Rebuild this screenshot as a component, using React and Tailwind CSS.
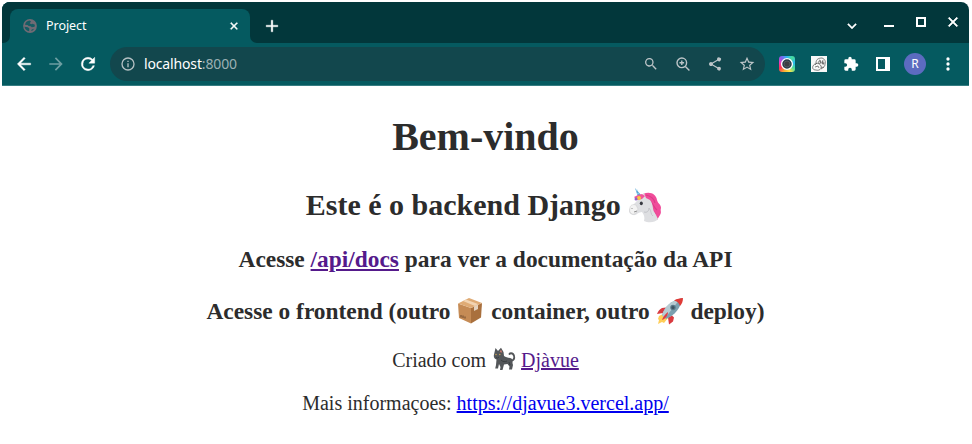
import React from "react";

const iconPaths = {
  back: "M20 11H7.83l5.59-5.59L12 4l-8 8 8 8 1.41-1.41L7.83 13H20v-2z",
  forward: "M12 4l-1.41 1.41L16.17 11H4v2h12.17l-5.58 5.59L12 20l8-8z",
  reload:
    "M17.65 6.35A7.958 7.958 0 0 0 12 4a8 8 0 1 0 7.73 10h-2.08A6 6 0 1 1 12 6c1.66 0 3.14.69 4.22 1.78L13 11h7V4l-2.35 2.35z",
  close:
    "M19 6.41L17.59 5 12 10.59 6.41 5 5 6.41 10.59 12 5 17.59 6.41 19 12 13.41 17.59 19 19 17.59 13.41 12z",
  plus: "M19 13h-6v6h-2v-6H5v-2h6V5h2v6h6z",
  chevron: "M7.41 8.59L12 13.17l4.59-4.58L18 10l-6 6-6-6z",
  info: "M11 7h2v2h-2zm0 4h2v6h-2zm1-9a10 10 0 1 0 0 20 10 10 0 0 0 0-20zm0 18a8 8 0 1 1 0-16 8 8 0 0 1 0 16z",
  search:
    "M15.5 14h-.79l-.28-.27a6.5 6.5 0 1 0-.7.7l.27.28v.79l5 4.99L20.49 19l-4.99-5zm-6 0a4.5 4.5 0 1 1 0-9 4.5 4.5 0 0 1 0 9z",
  share:
    "M18 16.08c-.76 0-1.44.3-1.96.77L8.91 12.7a3.3 3.3 0 0 0 0-1.4l7.05-4.11A2.99 2.99 0 1 0 15 5c0 .24.04.47.09.7L8.04 9.81a3 3 0 1 0 0 4.38l7.12 4.16a2.92 2.92 0 1 0 2.84-2.27z",
  star: "M22 9.24l-7.19-.62L12 2 9.19 8.63 2 9.24l5.46 4.73L5.82 21 12 17.27 18.18 21l-1.63-7.03L22 9.24zM12 15.4l-3.76 2.27 1-4.28-3.32-2.88 4.38-.38L12 6.1l1.71 4.04 4.38.38-3.32 2.88 1 4.28L12 15.4z",
  puzzle:
    "M20.5 11H19V7a2 2 0 0 0-2-2h-4V3.5a2.5 2.5 0 0 0-5 0V5H4a2 2 0 0 0-2 2v3.8h1.5a2.7 2.7 0 0 1 0 5.4H2V20c0 1.1.9 2 2 2h3.8v-1.5a2.7 2.7 0 0 1 5.4 0V22H17a2 2 0 0 0 2-2v-4h1.5a2.5 2.5 0 0 0 0-5z",
  more: "M12 8a2 2 0 1 0 0-4 2 2 0 0 0 0 4zm0 2a2 2 0 1 0 0 4 2 2 0 0 0 0-4zm0 6a2 2 0 1 0 0 4 2 2 0 0 0 0-4z",
};

function Icon({ name, className }) {
  return (
    <svg viewBox="0 0 24 24" fill="currentColor" className={`shrink-0 ${className}`}>
      <path d={iconPaths[name]} />
    </svg>
  );
}

function Globe() {
  return (
    <svg viewBox="0 0 16 16" className="size-4 shrink-0">
      <circle cx="8" cy="8" r="6.9" fill="#706b74" />
      <path d="M3 6.8C3.4 4.3 5.2 2.8 7.6 2.6L9 3.5 7.7 5.2l1.5 1.1 1.3-.6 2.4 1.1-.3 2-2.7.5-1.3-1.1-2-.3-1-1z" fill="#155c63" />
      <path d="M2.5 8.8l3.4.4 1.5 1.3-.3 2.7C4.7 13 2.9 11.4 2.5 8.8zm6.7 4.2l.5-1.6 2.4-.7c-.7 1.2-1.6 1.9-2.9 2.3z" fill="#155c63" />
    </svg>
  );
}

function ColorRing() {
  return (
    <span className="flex size-4 shrink-0 items-center justify-center rounded-[3px] bg-[conic-gradient(#27b8f4,#48dc9a,#27b8f4,#48dc9a,#ffe34b,#f6b332,#fa374e,#ed38bd,#8061ed,#27b8f4)]">
      <svg viewBox="0 0 16 16" className="size-4">
        <circle cx="8" cy="8" r="5.4" fill="#263b48" stroke="#fff" strokeWidth="1.3" />
        <circle cx="8" cy="8" r="3" fill="#3e3e43" stroke="#5a6065" strokeWidth=".8" />
      </svg>
    </span>
  );
}

function SketchExtension() {
  return (
    <svg viewBox="0 0 16 16" className="size-4 shrink-0" fill="none" stroke="#505050" strokeWidth=".7">
      <path fill="#f8f8f8" stroke="none" d="M0 0h16v16H0z" />
      <path d="M5 7C5 3 8 2 11 2c3 1 4 4 3 6 0 3-2 4-4 3M2 10c-1 2 0 4 3 4 3 1 6-1 5-4-1-3-6-4-8 0z" />
      <path d="M8 4l2 1-1 2m3-3-1 3 2 1M4 11l3-1 1 2m-2-5-2 2M10 13l3-2" />
      <circle cx="8.5" cy="6.5" r="1.2" />
      <circle cx="12" cy="7" r="1.1" />
    </svg>
  );
}

function Unicorn() {
  return (
    <svg viewBox="0 0 36 36" className="-mt-3 mr-px inline-block size-[36px] align-[-9px]">
      <path d="M15 6c7-3 13 0 14 6 1 4 4 4 4 8-1 3 1 4-1 7l-3 5-3-5-8-11z" fill="#f04c9a" />
      <path d="M18 7c5 1 8 3 9 8m-6-3c4 3 5 8 8 10m-7-5c0 5 3 7 6 9" fill="none" stroke="#dc3b88" strokeWidth="1.1" />
      <path d="M13 8l3-3 2 5 4 2c4 5 2 10 5 13l3 6c-3 4-10 4-14 2 1-4 0-6-2-9-4 0-6 4-9 3-4-1-5-4-3-7l6-6z" fill="#dedfe2" />
      <path d="M16 24c3 1 5-1 5-4 3 3 1 6 4 8" fill="none" stroke="#c4c5ca" strokeWidth="1" />
      <path d="M2 20c0-3 3-4 6-3l2 4c-1 3-3 6-6 5-2-1-3-3-2-6z" fill="#f3f3f3" stroke="#c8c8c8" strokeWidth=".5" />
      <path d="M7 0l6 7-3 2z" fill="#5aa7d5" />
      <path d="M8 3l2-1m-1 4 2-1" stroke="#a6dff8" strokeWidth=".8" />
      <path d="M6 9l4-2 4-1 3 2-3 3-5 1z" fill="#f0559c" />
      <circle cx="11" cy="10" r="2" fill="#f7c842" />
      <circle cx="8" cy="11" r="1.5" fill="#9263c4" />
      <ellipse cx="13.3" cy="15.3" rx="1.5" ry="1.9" fill="#373940" />
      <path d="M4 20v1m2 3 3-1" fill="none" stroke="#777" strokeWidth=".8" />
    </svg>
  );
}

function Package() {
  return (
    <svg viewBox="0 0 28 28" className="-mt-2 mr-px inline-block size-7 align-[-6px]">
      <path d="M2 6.5L15 11v15.5L3 21z" fill="#c58b55" />
      <path d="M15 11l11-5-1 14.5-10 6z" fill="#a9703d" />
      <path d="M2 6.5L13 1l13 5-11 5z" fill="#dfab75" />
      <path d="M7 4l3-1.5L22 7l-3 2z" fill="#f2d4b2" />
      <path d="M18 9.5l4-2v4.5l-4 2z" fill="#e5d2bd" />
      <path d="M5 18v2.5m2-2v2.5m2-1.5v2" stroke="#6f4a2e" />
    </svg>
  );
}

function Rocket() {
  return (
    <svg viewBox="0 0 28 28" className="-mt-2 mr-px inline-block size-7 align-[-6px]">
      <path d="M7 17l-4 2-1 3 1 1-1 4 4-2 2 1 4-5z" fill="#ffce58" />
      <path d="M10 10.5l-4 .5c-2 1-4 3-5 6l6-1zm6 8 2 2-1 4-4 3-1-7z" fill="#d93b40" />
      <path d="M6 18C9 9 15 4 26 1c-1 10-7 17-16 21z" fill="#7ba0af" />
      <path d="M6 18C9 9 15 4 24 2L9 21z" fill="#b6cbd2" />
      <path d="M18 3.5c3-2 6-2 9-2.5 0 3-1 6-3 8-1-3-3-5-6-5.5z" fill="#df3b37" />
      <circle cx="17" cy="10.5" r="2.7" fill="#587887" />
      <circle cx="17" cy="10.5" r="1.5" fill="#3c5361" />
      <path d="M12 15c-3 2-5 5-6 8 3-1 6-4 6-8z" fill="#df3c43" />
    </svg>
  );
}

function Cat() {
  return (
    <svg viewBox="0 0 25 25" className="-mt-2 inline-block size-[25px] align-[-5px]">
      <path d="M20 14c4-1 4-5 2-7-1-1-3-1-3.5 0" fill="none" stroke="#535659" strokeWidth="1.9" strokeLinecap="round" />
      <path d="M4.5 1L7 4l3-3.2L12.5 5l.5 4c2 2 5 1 8 3 1 2 0 4 1 6l-1 4.5h-3l.5-3-2-2.5-3.5.5-1.5 5.5H9l.5-3-1.5-3-1 4.5H4.2L5 18l.5-5.5C3.5 12 2.3 10 3 7.5z" fill="#535659" />
      <path d="M10 2.5l1.3 3.2L8.7 5z" fill="#c9786e" />
      <circle cx="5" cy="7.5" r=".8" fill="#c39b55" />
      <circle cx="8.8" cy="7.5" r=".8" fill="#c39b55" />
      <path d="M5 10.5l1.5.5L8 10m2 3c2 2 4 2 6 1m2 1 1 3" fill="none" stroke="#34383b" strokeWidth=".8" />
    </svg>
  );
}

function Browser() {
  return (
    <header className="h-[84px] rounded-t-[8px] bg-[#02373b] font-['Noto_Sans',sans-serif] text-white">
      <div className="flex h-[41px] items-stretch">
        <div className="flex w-2 items-end rounded-tl-[8px] bg-[#055a60]">
          <span className="h-[41px] w-2 rounded-tl-[8px] rounded-br-[7px] bg-[#02373b]" />
        </div>
        <div className="mt-[7px] flex h-[34px] w-60 items-center rounded-t-[8px] bg-[#055a60] pl-3 pr-2">
          <Globe />
          <span className="ml-2 text-[12.5px] leading-5 tracking-[-0.05px]">Project</span>
          <Icon name="close" className="ml-auto size-4 p-[2px] [stroke:white] [stroke-width:1.2]" />
        </div>
        <div className="flex w-2 items-end bg-[linear-gradient(#02373b_50%,#055a60_50%)]">
          <span className="h-[41px] w-2 rounded-bl-[7px] bg-[#02373b]" />
        </div>
        <Icon name="plus" className="ml-1 mt-[14px] size-5 [stroke:white] [stroke-width:.4]" />
        <div className="ml-auto mr-[8px] mt-[11px] flex h-4">
          <Icon name="chevron" className="mr-[23px] mt-[4px] size-[18px] [stroke:white] [stroke-width:.5]" />
          <span className="mt-[12px] h-[2px] w-[10px] bg-white" />
          <span className="ml-[22px] mt-1 size-[10px] border-2 border-white" />
          <Icon name="close" className="ml-[19px] mt-[1px] size-4 [stroke:white]" />
        </div>
      </div>
      <div className="flex h-[43px] items-center border-b border-[#357d82] bg-[#055a60] pl-[12px]">
        <Icon name="back" className="size-5 [stroke:white] [stroke-width:.5]" />
        <Icon name="forward" className="ml-3 size-5 text-[#6e9fa2]" />
        <Icon name="reload" className="ml-3 size-5 [stroke:white] [stroke-width:.5]" />
        <div className="ml-3 flex h-[34px] w-[655px] items-center rounded-full bg-[#12474d] pl-[10px] pr-[10px]">
          <Icon name="info" className="size-4 text-[#b4c0c3]" />
          <span className="ml-2 text-[14px] leading-5 tracking-[-0.15px]">
            localhost<span className="text-[#9bb0b3]">:8000</span>
          </span>
          <div className="ml-auto flex items-center gap-4 text-[#bdc5c8]">
            <Icon name="search" className="size-4" />
            <svg viewBox="0 0 16 16" className="size-4" fill="none" stroke="currentColor" strokeWidth="1.4">
              <circle cx="6.8" cy="6.8" r="4.8" />
              <path d="M10.4 10.4l4 4M4.5 6.8h4.6M6.8 4.5v4.6" />
            </svg>
            <Icon name="share" className="size-4" />
            <Icon name="star" className="size-4 scale-110" />
          </div>
        </div>
        <div className="ml-[14px] flex items-center">
          <ColorRing />
          <span className="ml-4 flex"><SketchExtension /></span>
          <Icon name="puzzle" className="ml-4 size-4" />
          <span className="ml-[17px] h-[14px] w-[14px] border-y-2 border-l-2 border-r-[5px] border-white" />
          <span className="ml-[14px] flex size-[22px] items-center justify-center rounded-full bg-[#5c6bc0] text-[12px] leading-none">R</span>
          <Icon name="more" className="ml-3 size-5" />
        </div>
      </div>
    </header>
  );
}

export default function App() {
  return (
    <div className="h-[444px] w-[972px] overflow-hidden bg-white pl-[2px] pr-[3px] pt-[2px]">
      <Browser />
      <main className="whitespace-nowrap pt-[28px] text-center font-['Liberation_Serif',serif] text-[20px] leading-[23px] text-[#2c2c2c]">
        <h1 className="h-[46px] text-[40px] font-bold leading-[46px]">Bem-vindo</h1>
        <h2 className="mt-7 h-[34px] text-[30px] font-bold leading-[34px]">
          Este é o backend Django <Unicorn />
        </h2>
        <h3 className="mt-6 h-[27px] text-[23.4px] font-bold leading-[27px]">
          Acesse <a className="text-[#551a8b] underline">/api/docs</a> para ver a documentação da API
        </h3>
        <h3 className="mt-[25px] h-[27px] text-[23.4px] font-bold leading-[27px]">
          Acesse o frontend (outro <Package /> container, outro <Rocket /> deploy)
        </h3>
        <p className="mt-6 h-[23px]">
          Criado com <Cat /> <a className="text-[#551a8b] underline">Djàvue</a>
        </p>
        <p className="mt-5 h-[23px]">
          Mais informaçoes: <a className="text-[#0000ee] underline">https://djavue3.vercel.app/</a>
        </p>
      </main>
    </div>
  );
}
